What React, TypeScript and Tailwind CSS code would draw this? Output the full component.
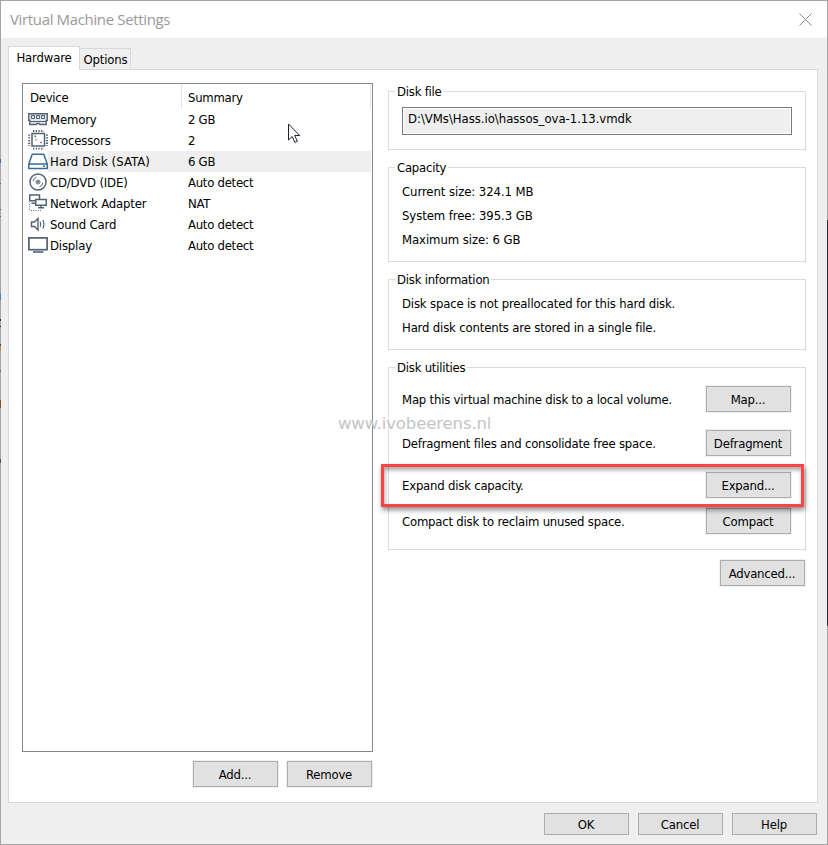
import type { ReactNode } from 'react';

const INK = '#526274';

const MemoryIcon = () => (
  <svg width="20" height="21" viewBox="0 0 20 21" fill="none" stroke={INK}>
    <path d="M.75 4.750h18.500v6.750h-1v4H12l-1-1H9l-1 1H1.750V11.500h-1z" strokeWidth="1.400" fill="#e3e6ea" />
    <path d="M3.500 6.500h3v3h-3zM8.500 6.500h3v3h-3zM13.500 6.500h3v3h-3z" fill="#dfe3e8" />
    <path d="M1.500 12.500h17" />
  </svg>
);

const ProcessorIcon = () => (
  <svg width="20" height="21" viewBox="0 0 20 21" fill="none" stroke={INK}>
    <rect x="4" y="3.500" width="12.500" height="12.500" strokeWidth="1.500" fill="#fff" />
    <path d="M5 1h11M5 18.700h11" strokeWidth="1.800" strokeDasharray="1.300 1.400" />
    <path d="M1.200 4.500v11.500M19 4.500v11.500" strokeWidth="2" strokeDasharray="1.300 1.400" />
    <path d="M6.500 6.300h1.500M7.500 9.700h1M12.300 12.500h1.500" strokeWidth="1.500" />
  </svg>
);

const DiskIcon = () => (
  <svg width="20" height="21" viewBox="0 0 20 21" fill="none" stroke="#396b95" strokeWidth="1.500">
    <path d="M.75 13L4.250 3.250h11.500l3.500 9.750v4.500H.75z" fill="#fff" strokeLinejoin="round" />
    <path d="M1 13h18M15 15.300h2" />
  </svg>
);

const DiscIcon = () => (
  <svg width="20" height="21" viewBox="0 0 20 21" fill="none" stroke={INK}>
    <circle cx="10" cy="10" r="8" strokeWidth="1.500" />
    <circle cx="10" cy="10" r="2" strokeWidth=".9" />
    <circle cx="10" cy="10" r=".7" fill={INK} />
    <path d="M5.200 9.200a5 5 0 0 1 3.400-4.100M14.800 10.800a5 5 0 0 1-3.400 4.100" />
  </svg>
);

const NetworkIcon = () => (
  <svg width="20" height="21" viewBox="0 0 20 21" fill="none" stroke={INK}>
    <path d="M7 7.750H1.750v-5.750h9.750V6" strokeWidth="1.500" />
    <path d="M3.500 10.250h4" strokeWidth="1.500" />
    <rect x="7.750" y="6.500" width="10.500" height="5.750" strokeWidth="1.500" fill="#fff" />
    <path d="M13 12.500v2M10 14.750h6" strokeWidth="1.500" />
    <path d="M1.500 11v7M3 17.500h10" strokeDasharray="1 1.300" />
  </svg>
);

const SoundIcon = () => (
  <svg width="20" height="21" viewBox="0 0 20 21" fill="none" stroke={INK} strokeWidth="1.400">
    <path d="M3.500 8h3l3.500-3.500v11.500l-3.500-3.500h-3z" />
    <path d="M12.200 7.700q1.300 2.500 0 5M14.800 6q2.300 4.200 0 8.500" strokeWidth="1.200" />
  </svg>
);

const DisplayIcon = () => (
  <svg width="20" height="21" viewBox="0 0 20 21" fill="none" stroke={INK}>
    <rect x=".9" y="2.900" width="18.200" height="11.800" strokeWidth="1.700" />
    <path d="M5 17h10.500" strokeWidth="1.600" />
  </svg>
);

const DEVICES = [
  { name: 'Memory', summary: '2 GB', icon: <MemoryIcon /> },
  { name: 'Processors', summary: '2', icon: <ProcessorIcon /> },
  { name: 'Hard Disk (SATA)', summary: '6 GB', icon: <DiskIcon />, selected: true },
  { name: 'CD/DVD (IDE)', summary: 'Auto detect', icon: <DiscIcon /> },
  { name: 'Network Adapter', summary: 'NAT', icon: <NetworkIcon /> },
  { name: 'Sound Card', summary: 'Auto detect', icon: <SoundIcon /> },
  { name: 'Display', summary: 'Auto detect', icon: <DisplayIcon /> },
];

const UTILITIES = [
  { text: 'Map this virtual machine disk to a local volume.', action: 'Map...', gap: 'mt-[9px]' },
  { text: 'Defragment files and consolidate free space.', action: 'Defragment', gap: 'mt-[18px]' },
  { text: 'Expand disk capacity.', action: 'Expand...', gap: 'mt-4' },
  { text: 'Compact disk to reclaim unused space.', action: 'Compact', gap: 'mt-[10px]' },
];

// What the desktop behind leaves along the left edge of the window
const EDGE = [
  { top: 159, height: 4, color: '#3f67b5' },
  { top: 183, height: 1, color: '#3b6ea5' },
  { top: 209, height: 1, color: '#3b6ea5' },
  { top: 216, height: 1, color: '#2f6fc0' },
  { top: 293, height: 7, color: '#4f86b8' },
  { top: 319, height: 2, color: '#333333' },
  { top: 326, height: 1, color: '#333333' },
  { top: 344, height: 2, color: '#34488c' },
  { top: 346, height: 5, color: '#c08d4c' },
  { top: 370, height: 2, color: '#3a7fc0' },
  { top: 400, height: 8, color: '#8a4f2a' },
  { top: 459, height: 4, color: '#4b4e80' },
];

function Button({ children, small = false }: { children: ReactNode; small?: boolean }) {
  return (
    <button
      className={`w-[85px] shrink-0 border border-[#adadad] bg-[#e1e1e1] pr-px text-center tracking-[-0.2px] ${
        small ? 'h-[22px] leading-[22px]' : 'h-[26px] leading-[26px] shadow-[0_0_0_1px_#f0f0f0]'
      }`}
    >
      {children}
    </button>
  );
}

function Group({ title, className, children }: { title: string; className: string; children: ReactNode }) {
  return (
    <section className={`flex flex-col border border-[#dcdcdc] pr-[14px] pl-[13px] ${className}`}>
      <h2 className="-mt-[9px] -ml-[7px] h-[18px] w-fit shrink-0 bg-white pr-[2px] pl-[2px] leading-[18px] tracking-[-0.24px]">{title}</h2>
      {children}
    </section>
  );
}

export default function App() {
  return (
    <div className="relative flex h-[845px] w-[828px] flex-col border border-[#a5a5a5] bg-[#efefef] font-['DejaVu_Sans_Condensed','DejaVu_Sans',sans-serif] text-[13px] tracking-[-0.17px] whitespace-nowrap text-black">
      <header className="flex h-[37px] shrink-0 items-center justify-between bg-white pr-[15px] pl-[9px]">
        <h1 className="font-['Open_Sans','Noto_Sans',sans-serif] text-[15px] tracking-[-0.35px] text-[#999]">Virtual Machine Settings</h1>
        <svg width="13" height="13" viewBox="0 0 13 13" stroke="#8a8a8a" strokeWidth="1">
          <path d="M.5.5l12 12M12.500.5l-12 12" />
        </svg>
      </header>

      <nav className="flex h-[31px] shrink-0 items-end pl-[7px]">
        <div className="z-10 -mb-px h-6 w-[72px] border border-b-0 border-[#d9d9d9] bg-white text-center leading-[22px]">Hardware</div>
        <div className="h-[21px] w-[51px] border border-b-0 border-l-0 border-[#d9d9d9] pl-px text-center leading-[22px]">Options</div>
      </nav>

      <main className="mr-[9px] ml-[7px] flex h-[734px] shrink-0 border border-[#d9d9d9] bg-white pt-[13px] pl-[13px]">
        <div className="w-[351px] shrink-0">
          <div className="h-[669px] border border-[#828790]">
            <div className="flex h-[25px] pt-px leading-[26px] tracking-[-0.27px]">
              <span className="h-6 w-[159px] border-r border-[#e5e5e5] pl-[7px]">Device</span>
              <span className="h-6 w-[189px] border-r border-[#e5e5e5] pl-[6px]">Summary</span>
            </div>
            {DEVICES.map((device) => (
              <div key={device.name} className="flex h-[21px] pl-[5px] leading-[22px]">
                {device.icon}
                <div className={`mr-px flex flex-1 pl-[2px] ${device.selected ? 'bg-[#efefef]' : ''}`}>
                  <span className={`w-[138px] ${device.selected ? 'tracking-[0.1px]' : ''}`}>{device.name}</span>
                  <span className="tracking-[-0.27px]">{device.summary}</span>
                </div>
              </div>
            ))}
          </div>
          <div className="mt-[9px] flex justify-end gap-[9px] pr-px">
            <Button>Add...</Button>
            <Button>Remove</Button>
          </div>
        </div>

        <div className="ml-[15px] flex w-[418px] flex-col pt-2">
          <Group title="Disk file" className="h-[59px]">
            <div className="mt-[6px] h-[28px] w-[390px] border border-[#7a7a7a] bg-[#efefef] pl-[5px] leading-[21px] tracking-[-0.03px] shadow-[inset_0_0_0_1px_#fff]">
              D:\VMs\Hass.io\hassos_ova-1.13.vmdk
            </div>
          </Group>

          <Group title="Capacity" className="mt-[17px] h-[95px]">
            <div className="mt-[3px] leading-6 tracking-[-0.08px]">
              <p>Current size: 324.1 MB</p>
              <p>System free: 395.3 GB</p>
              <p>Maximum size: 6 GB</p>
            </div>
          </Group>

          <Group title="Disk information" className="mt-[17px] h-[71px]">
            <div className="mt-[3px] leading-6">
              <p>Disk space is not preallocated for this hard disk.</p>
              <p>Hard disk contents are stored in a single file.</p>
            </div>
          </Group>

          <Group title="Disk utilities" className="mt-[17px] h-[183px]">
            {UTILITIES.map((item) => (
              <div key={item.action} className={`flex h-[26px] shrink-0 justify-between ${item.gap}`}>
                <span className="leading-[28px] tracking-[-0.21px]">{item.text}</span>
                <Button>{item.action}</Button>
              </div>
            ))}
          </Group>

          <div className="mt-[10px] flex justify-end pr-px">
            <Button>Advanced...</Button>
          </div>
        </div>
      </main>

      <footer className="flex justify-end gap-[9px] pt-[10px] pr-[10px]">
        <Button small>OK</Button>
        <Button small>Cancel</Button>
        <Button small>Help</Button>
      </footer>

      <div className="absolute top-[463px] left-[380px] h-[43px] w-[423px] border-[3px] border-[#fd4444] shadow-[1px_3px_5px_rgba(0,0,0,0.45),inset_1px_3px_4px_rgba(0,0,0,0.35)]" />
      <div className="absolute top-[410px] left-[337px] font-['DejaVu_Sans',sans-serif] text-[16.5px] leading-[25px] tracking-[-0.12px] text-[#c4c4c4]">www.ivobeerens.nl</div>

      <svg className="absolute top-[122px] left-[287px]" width="13" height="21" viewBox="0 0 13 21" fill="#fff" stroke="#1f1f2b">
        <path d="M.5 1v16l3.700-3.500 2.700 5.900 2.500-1.100-2.700-5.800h5z" />
      </svg>

      {EDGE.map((mark) => (
        <div key={mark.top} className="absolute -left-px w-px" style={{ top: mark.top - 1, height: mark.height, background: mark.color }} />
      ))}
      <div className="absolute top-[219px] -right-px h-[406px] w-px bg-[#2f2f33]" />
    </div>
  );
}
